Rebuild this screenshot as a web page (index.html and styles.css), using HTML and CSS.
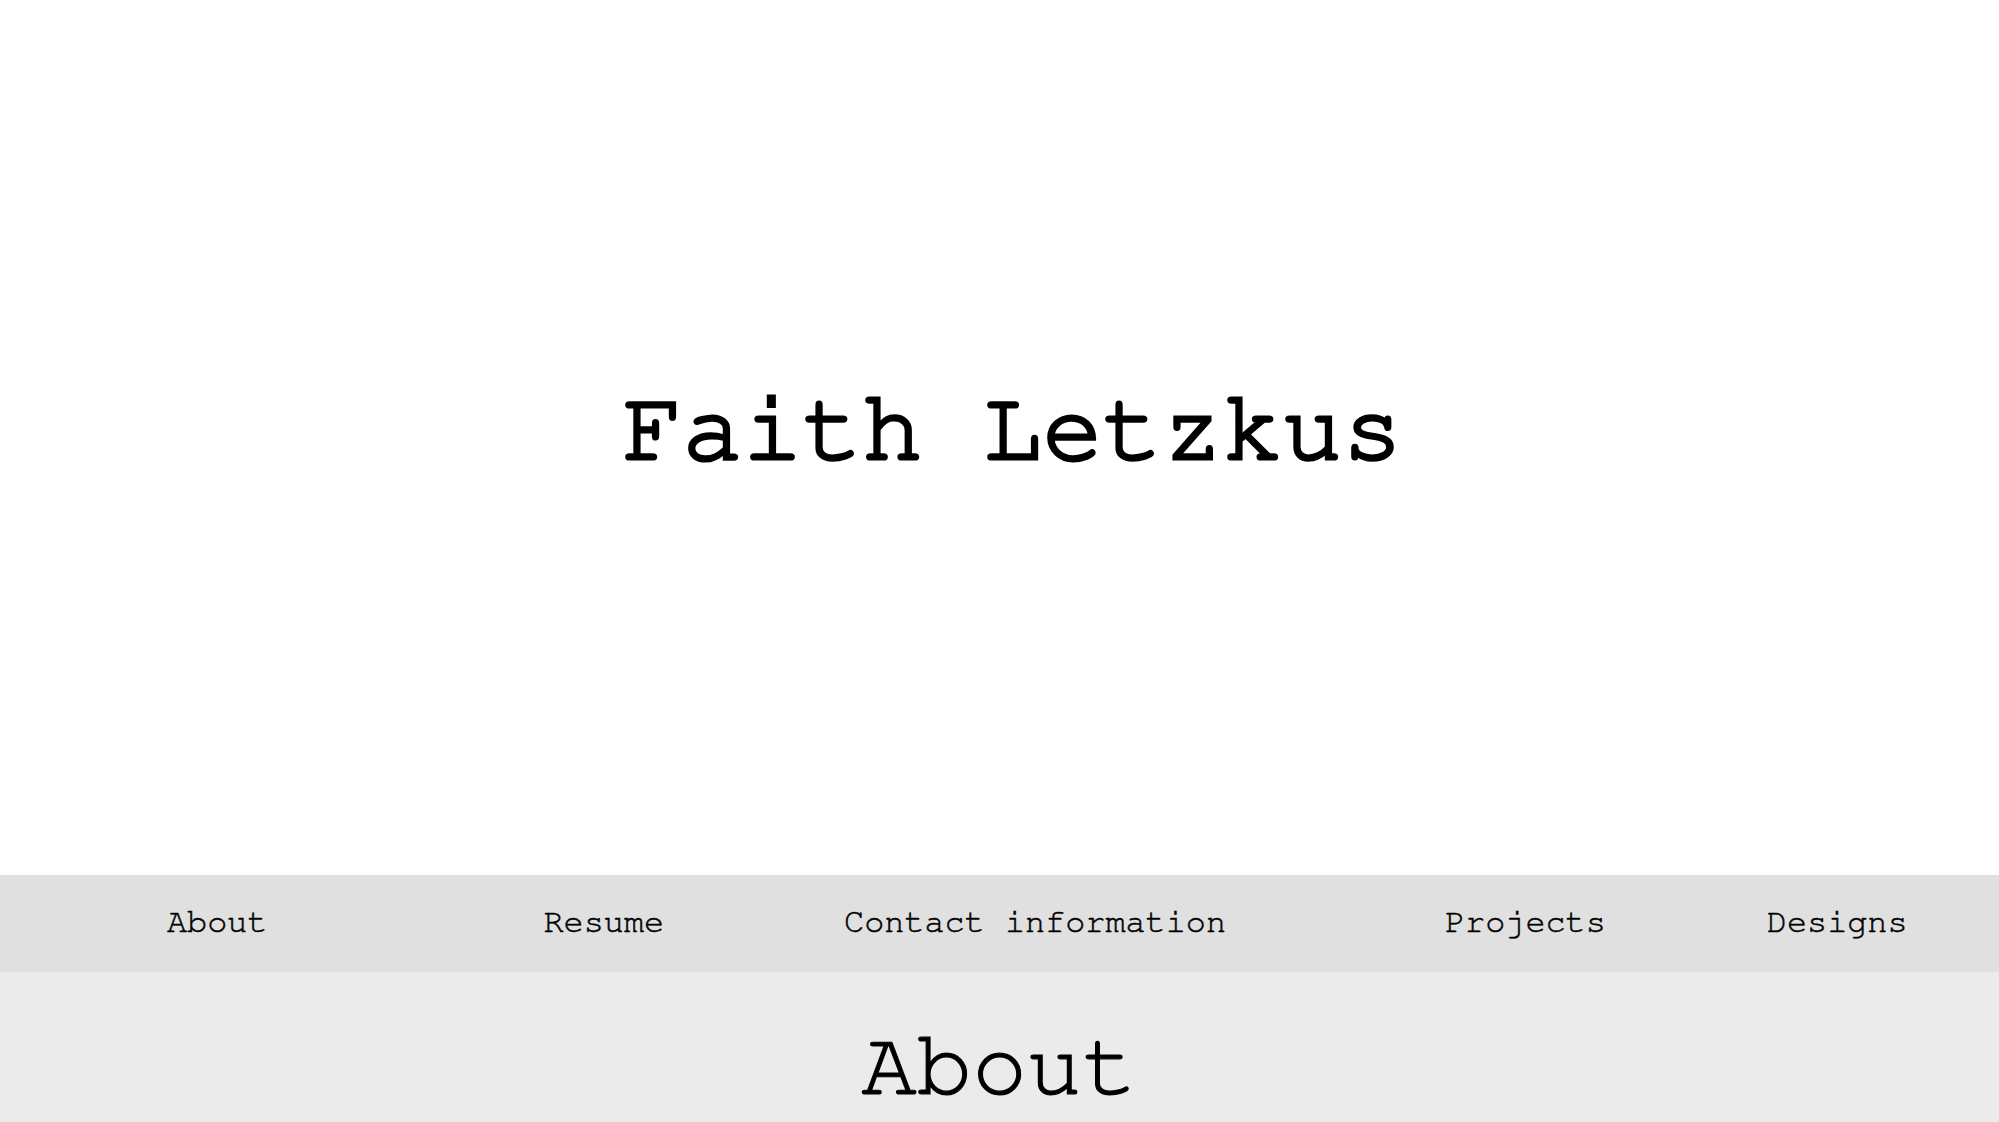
FILE: index.html
```html
<!DOCTYPE html>
<html lang="en">
<head>
<meta charset="utf-8">
<title>Faith Letzkus</title>
<link rel="stylesheet" href="styles.css">
</head>
<body>
<header class="hero">
  <h1 class="hero-title">Faith Letzkus</h1>
</header>
<nav class="nav">
  <a class="nav-link nav-about" href="#about">About</a>
  <a class="nav-link nav-resume" href="#resume">Resume</a>
  <a class="nav-link nav-contact" href="#contact">Contact information</a>
  <a class="nav-link nav-projects" href="#projects">Projects</a>
  <a class="nav-link nav-designs" href="#designs">Designs</a>
</nav>
<section class="section" id="about">
  <h2 class="section-title">About</h2>
</section>
</body>
</html>
```

FILE: styles.css
```css
html, body {
  margin: 0;
  padding: 0;
}
body {
  font-family: "FreeMono", "Liberation Mono", "Courier New", monospace;
  color: #000;
  background: #fff;
  overflow: hidden;
}
.hero {
  height: 875px;
  display: flex;
  align-items: center;
  justify-content: center;
}
.hero-title {
  margin: 0;
  padding-left: 26px;
  padding-bottom: 18px;
  font-size: 100px;
  font-weight: normal;
  line-height: 1;
  -webkit-text-stroke: 3.2px #000;
}
.nav {
  background: #e0e0e0;
  height: 97px;
  display: flex;
  align-items: center;
  padding-left: 167px;
  padding-bottom: 2px;
  box-sizing: border-box;
}
.nav-link {
  color: #000;
  text-decoration: none;
  font-size: 33.5px;
  line-height: 1;
  white-space: nowrap;
  -webkit-text-stroke: 0.5px #000;
}
.nav-resume { margin-left: 276px; }
.nav-contact { margin-left: 180px; }
.nav-projects { margin-left: 219px; }
.nav-designs { margin-left: 161px; }
.section {
  background: #ebebeb;
  min-height: 300px;
  padding-top: 48px;
}
.section-title {
  margin: 0;
  text-align: center;
  font-size: 92px;
  font-weight: normal;
  line-height: 1;
  -webkit-text-stroke: 1.2px #000;
}
```
